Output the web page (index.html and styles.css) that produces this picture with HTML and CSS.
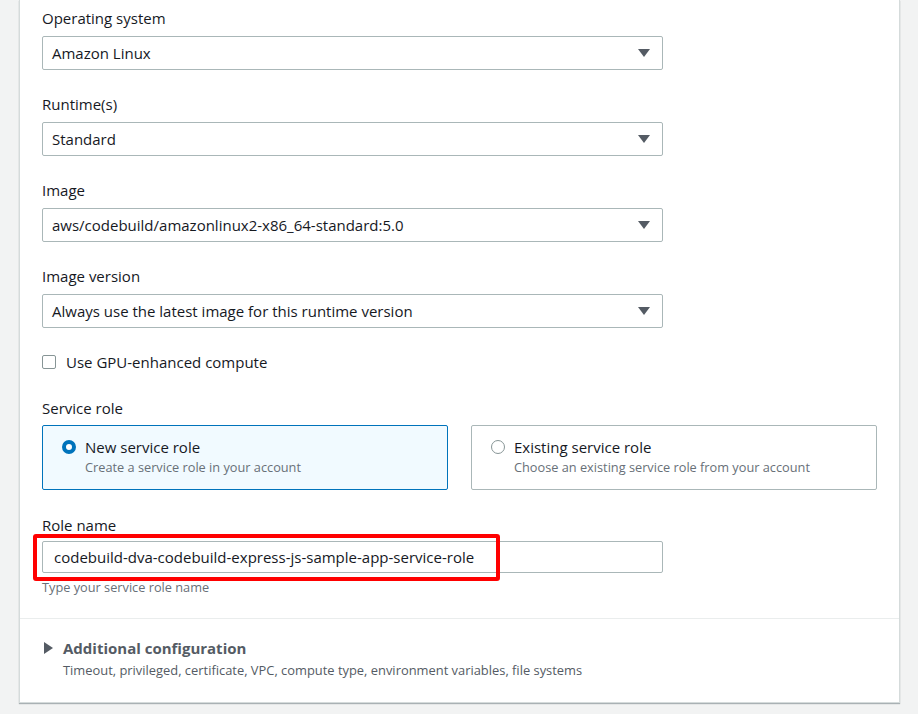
FILE: index.html
```html
<!DOCTYPE html>
<html lang="en">
<head>
<meta charset="utf-8">
<title>Environment</title>
<link rel="stylesheet" href="styles.css">
</head>
<body>
<div class="page">
  <section class="card">
    <div class="field">
      <div class="label">Operating system</div>
      <div class="select"><span>Amazon Linux</span><span class="caret"></span></div>
    </div>
    <div class="field">
      <div class="label">Runtime(s)</div>
      <div class="select"><span>Standard</span><span class="caret"></span></div>
    </div>
    <div class="field">
      <div class="label">Image</div>
      <div class="select"><span>aws/codebuild/amazonlinux2-x86_64-standard:5.0</span><span class="caret"></span></div>
    </div>
    <div class="field">
      <div class="label">Image version</div>
      <div class="select"><span>Always use the latest image for this runtime version</span><span class="caret"></span></div>
    </div>
    <label class="check-row"><span class="checkbox"></span><span>Use GPU-enhanced compute</span></label>
    <div class="field field-tiles">
      <div class="label">Service role</div>
      <div class="tiles">
        <div class="tile tile-selected">
          <span class="radio radio-on"></span>
          <div>
            <div class="tile-title">New service role</div>
            <div class="tile-desc">Create a service role in your account</div>
          </div>
        </div>
        <div class="tile">
          <span class="radio"></span>
          <div>
            <div class="tile-title">Existing service role</div>
            <div class="tile-desc">Choose an existing service role from your account</div>
          </div>
        </div>
      </div>
    </div>
    <div class="field field-last">
      <div class="label">Role name</div>
      <div class="input-wrap">
        <div class="input">codebuild-dva-codebuild-express-js-sample-app-service-role</div>
        <div class="highlight"></div>
      </div>
      <div class="help">Type your service role name</div>
    </div>
    <div class="expander">
      <div class="exp-head"><span class="tri"></span><span class="exp-title">Additional configuration</span></div>
      <div class="exp-desc">Timeout, privileged, certificate, VPC, compute type, environment variables, file systems</div>
    </div>
  </section>
</div>
</body>
</html>
```

FILE: styles.css
```css
html, body {
  margin: 0;
  padding: 0;
  background: #f2f3f3;
  font-family: "Open Sans", "Noto Sans", sans-serif;
  color: #16191f;
  font-size: 15px;
}
.page {
  padding: 0 18px 11px 19px;
}
.card {
  background: #ffffff;
  border: 1px solid #d5dbdb;
  border-top: none;
  box-shadow: 0 1px 1px rgba(0,28,36,0.3);
}
.field {
  padding: 7px 22px 0 22px;
  margin-bottom: 16px;
}
.label {
  line-height: 22px;
  margin-bottom: 7px;
}
.select {
  box-sizing: border-box;
  width: 621px;
  height: 34px;
  border: 1px solid #aab7b8;
  border-radius: 2px;
  display: flex;
  align-items: center;
  justify-content: space-between;
  padding: 0 12px 0 9px;
  line-height: 22px;
}
.caret {
  width: 0;
  height: 0;
  border-left: 6px solid transparent;
  border-right: 6px solid transparent;
  border-top: 8px solid #545b64;
}
.check-row {
  display: flex;
  align-items: center;
  gap: 10px;
  padding: 7px 22px 0 22px;
  line-height: 22px;
  margin-bottom: 17px;
}
.checkbox {
  box-sizing: border-box;
  width: 14px;
  height: 14px;
  border: 1px solid #879596;
  border-radius: 2px;
}
.field-tiles .label {
  margin-bottom: 6px;
}
.field-tiles {
  margin-bottom: 17px;
}
.tiles {
  display: grid;
  grid-template-columns: 1fr 1fr;
  gap: 23px;
}
.tile {
  box-sizing: border-box;
  height: 65px;
  border: 1px solid #aab7b8;
  border-radius: 2px;
  display: flex;
  align-items: flex-start;
  gap: 9px;
  padding: 10px 19px;
}
.tile-selected {
  background: #f1faff;
  border-color: #0073bb;
}
.radio {
  box-sizing: border-box;
  flex: none;
  width: 14px;
  height: 14px;
  border-radius: 50%;
  border: 1.5px solid #879596;
  margin-top: 4px;
}
.radio-on {
  border: 4.5px solid #0073bb;
  background: #ffffff;
}
.tile-title {
  line-height: 22px;
}
.tile-desc {
  font-size: 12.75px;
  line-height: 18px;
  color: #687078;
}
.field-last {
  margin-bottom: 0;
}
.field-last .label {
  margin-bottom: 5px;
}
.input-wrap {
  position: relative;
  width: 621px;
}
.input {
  box-sizing: border-box;
  height: 32px;
  border: 1px solid #aab7b8;
  border-radius: 2px;
  padding: 0 11px;
  line-height: 30px;
}
.highlight {
  position: absolute;
  left: -9px;
  top: -7px;
  width: 467px;
  height: 47px;
  box-sizing: border-box;
  border: 4px solid #ff0000;
  border-radius: 3px;
}
.help {
  font-size: 12.75px;
  line-height: 18px;
  color: #687078;
  margin-top: 5px;
  padding-bottom: 22px;
}
.expander {
  border-top: 1px solid #eaeded;
  padding: 18px 22px 23px 22px;
}
.exp-head {
  display: flex;
  align-items: center;
  gap: 10px;
  line-height: 22px;
}
.tri {
  width: 0;
  height: 0;
  border-top: 6px solid transparent;
  border-bottom: 6px solid transparent;
  border-left: 9px solid #545b64;
  margin-left: 2px;
}
.exp-title {
  font-weight: 700;
  color: #545b64;
}
.exp-desc {
  font-size: 12.9px;
  line-height: 18px;
  margin-top: 2px;
  color: #545b64;
  padding-left: 21px;
}
```
